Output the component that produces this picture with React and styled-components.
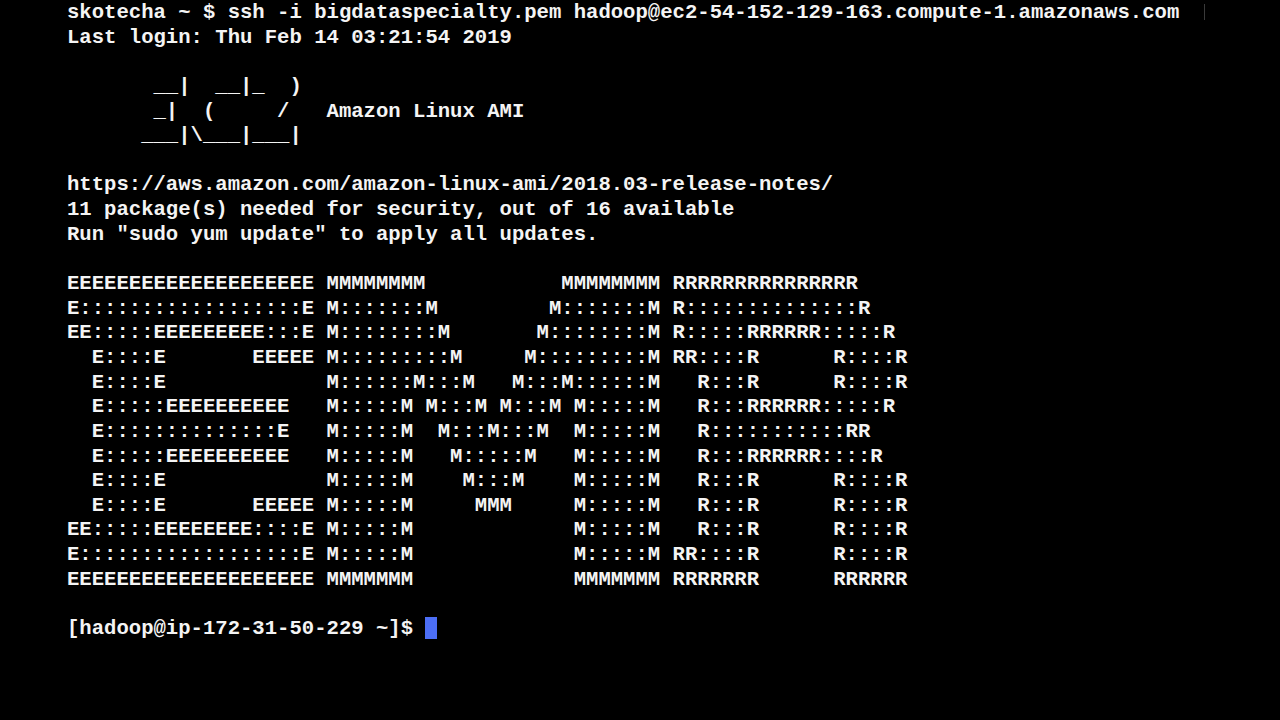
import React from 'react';
import styled, { createGlobalStyle } from 'styled-components';

const GlobalStyle = createGlobalStyle`
  html, body {
    margin: 0;
    padding: 0;
    background: #000;
  }
`;

const Screen = styled.div`
  position: relative;
  width: 1280px;
  height: 720px;
  overflow: hidden;
  background: #000;
  box-sizing: border-box;
  padding: 1px 0 0 67px;
`;

const Output = styled.div`
  display: flex;
  flex-direction: column;
  font-family: "Liberation Mono", "Courier New", monospace;
  font-weight: bold;
  font-size: 20.6px;
  line-height: 24.65px;
  color: #f4f4f4;
`;

const Line = styled.div`
  white-space: pre;
  height: 24.65px;
`;

const Cursor = styled.span`
  display: inline-block;
  width: 12px;
  height: 22px;
  background: #4c6ef5;
  vertical-align: -5px;
`;

/* faint leftover cursor mark at the end of the first line */
const GhostMark = styled.span`
  position: absolute;
  top: 4px;
  left: 1204px;
  width: 1px;
  height: 16px;
  background: #3a3a3a;
`;

const lines = [
  'skotecha ~ $ ssh -i bigdataspecialty.pem hadoop@ec2-54-152-129-163.compute-1.amazonaws.com',
  'Last login: Thu Feb 14 03:21:54 2019',
  '',
  '       __|  __|_  )',
  '       _|  (     /   Amazon Linux AMI',
  '      ___|\\___|___|',
  '',
  'https://aws.amazon.com/amazon-linux-ami/2018.03-release-notes/',
  '11 package(s) needed for security, out of 16 available',
  'Run "sudo yum update" to apply all updates.',
  '',
  'EEEEEEEEEEEEEEEEEEEE MMMMMMMM           MMMMMMMM RRRRRRRRRRRRRRR',
  'E::::::::::::::::::E M:::::::M         M:::::::M R::::::::::::::R',
  'EE:::::EEEEEEEEE:::E M::::::::M       M::::::::M R:::::RRRRRR:::::R',
  '  E::::E       EEEEE M:::::::::M     M:::::::::M RR::::R      R::::R',
  '  E::::E             M::::::M:::M   M:::M::::::M   R:::R      R::::R',
  '  E:::::EEEEEEEEEE   M:::::M M:::M M:::M M:::::M   R:::RRRRRR:::::R',
  '  E::::::::::::::E   M:::::M  M:::M:::M  M:::::M   R:::::::::::RR',
  '  E:::::EEEEEEEEEE   M:::::M   M:::::M   M:::::M   R:::RRRRRR::::R',
  '  E::::E             M:::::M    M:::M    M:::::M   R:::R      R::::R',
  '  E::::E       EEEEE M:::::M     MMM     M:::::M   R:::R      R::::R',
  'EE:::::EEEEEEEE::::E M:::::M             M:::::M   R:::R      R::::R',
  'E::::::::::::::::::E M:::::M             M:::::M RR::::R      R::::R',
  'EEEEEEEEEEEEEEEEEEEE MMMMMMM             MMMMMMM RRRRRRR      RRRRRR',
  '',
];

const App = () => {
  return (
    <>
      <GlobalStyle />
      <Screen>
        <GhostMark />
        <Output>
          {lines.map((text, i) => (
            <Line key={i}>{text}</Line>
          ))}
          <Line>
            {'[hadoop@ip-172-31-50-229 ~]$ '}
            <Cursor />
          </Line>
        </Output>
      </Screen>
    </>
  );
};

export default App;
